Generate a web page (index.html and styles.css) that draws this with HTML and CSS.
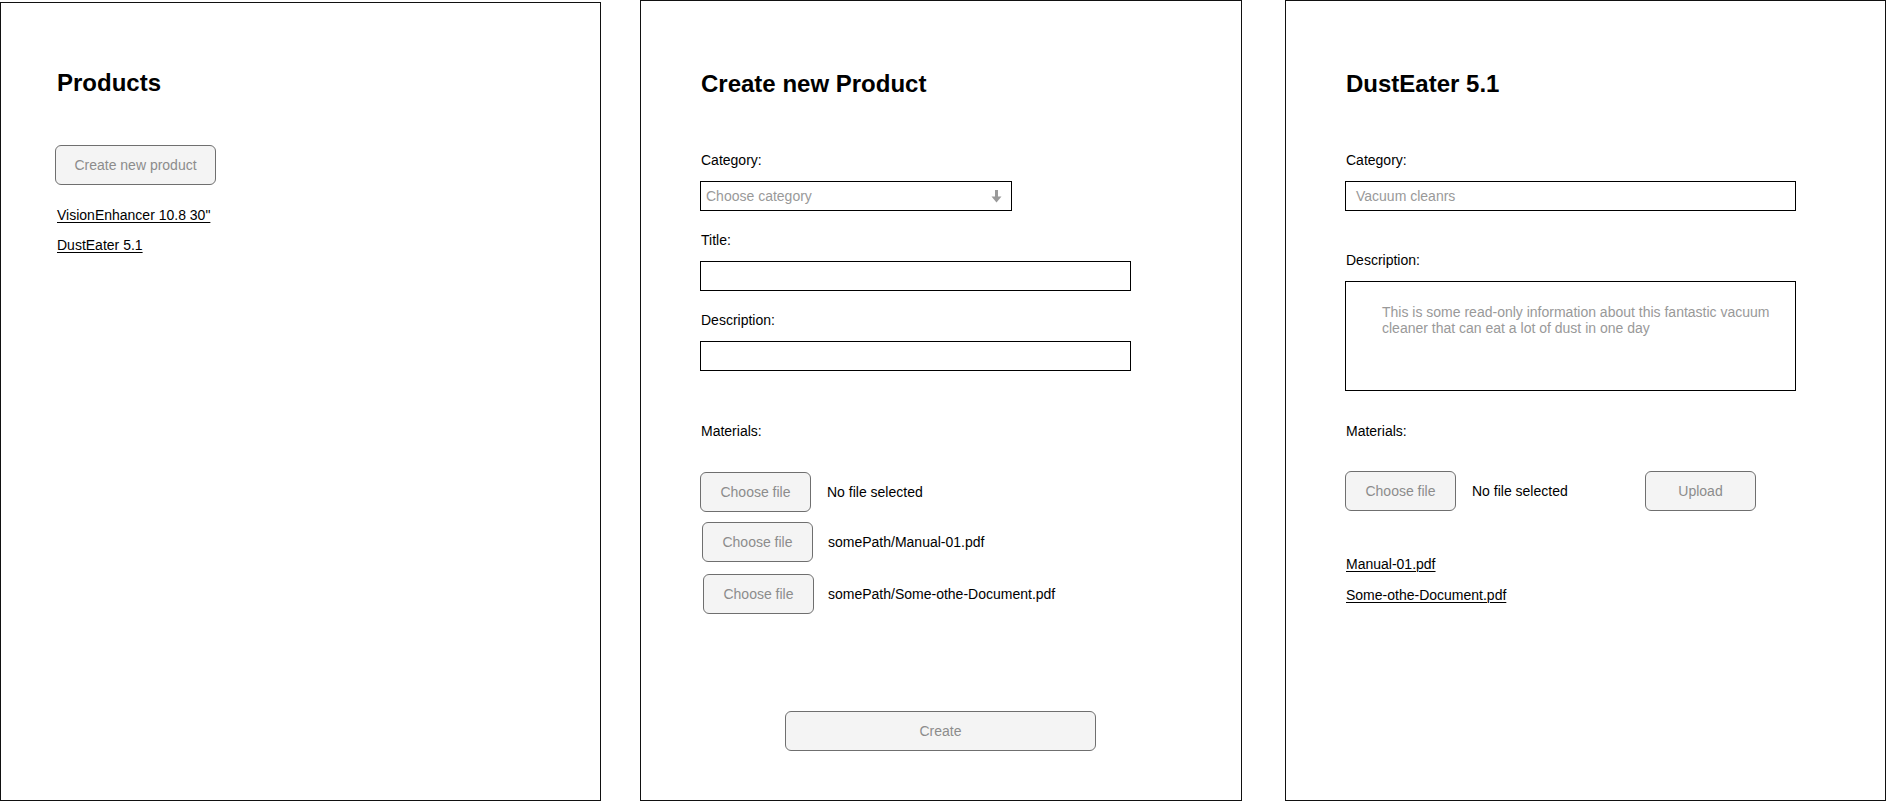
FILE: index.html
```html
<!DOCTYPE html>
<html lang="en">
<head>
<meta charset="utf-8">
<title>Products mockups</title>
<link rel="stylesheet" href="styles.css">
</head>
<body>
<div class="board">
  <section class="panel panel-list">
    <h1 class="title">Products</h1>
    <button class="btn btn-new" type="button">Create new product</button>
    <a class="link link-first" href="#">VisionEnhancer 10.8 30"</a>
    <a class="link link-next" href="#">DustEater 5.1</a>
  </section>

  <section class="panel panel-create">
    <h1 class="title">Create new Product</h1>
    <div class="label label-first">Category:</div>
    <div class="field select">
      <span class="placeholder">Choose category</span>
      <svg class="arrow" width="11" height="13" viewBox="0 0 11 13"><rect x="4" y="0" width="3" height="7" fill="#9a9a9a"/><path d="M0.5 6.5 H10.5 L5.5 12.5 Z" fill="#9a9a9a"/></svg>
    </div>
    <div class="label">Title:</div>
    <div class="field wide"></div>
    <div class="label">Description:</div>
    <div class="field wide"></div>
    <div class="label label-materials">Materials:</div>
    <div class="files">
      <div class="file-row"><button class="btn btn-file" type="button">Choose file</button><span class="file-name">No file selected</span></div>
      <div class="file-row row-2"><button class="btn btn-file" type="button">Choose file</button><span class="file-name">somePath/Manual-01.pdf</span></div>
      <div class="file-row row-3"><button class="btn btn-file" type="button">Choose file</button><span class="file-name">somePath/Some-othe-Document.pdf</span></div>
    </div>
    <button class="btn btn-create" type="button">Create</button>
  </section>

  <section class="panel panel-detail">
    <h1 class="title">DustEater 5.1</h1>
    <div class="label label-first">Category:</div>
    <div class="field readonly">Vacuum cleanrs</div>
    <div class="label label-desc">Description:</div>
    <div class="field area">This is some read-only information about this fantastic vacuum cleaner that can eat a lot of dust in one day</div>
    <div class="label label-materials2">Materials:</div>
    <div class="upload-row">
      <button class="btn btn-file" type="button">Choose file</button>
      <span class="file-name">No file selected</span>
      <button class="btn btn-upload" type="button">Upload</button>
    </div>
    <a class="link link-doc" href="#">Manual-01.pdf</a>
    <a class="link link-doc2" href="#">Some-othe-Document.pdf</a>
  </section>
</div>
</body>
</html>
```

FILE: styles.css
```css
html, body {
  margin: 0;
  padding: 0;
  background: #ffffff;
}

body {
  font-family: "Liberation Sans", Arial, Helvetica, sans-serif;
  font-size: 14px;
  line-height: 16px;
  color: #000;
  width: 1886px;
  height: 809px;
  overflow: hidden;
}

.board {
  display: flex;
  align-items: flex-start;
}

.panel {
  box-sizing: border-box;
  border: 1px solid #111;
  display: flex;
  flex-direction: column;
  align-items: flex-start;
  background: #fff;
}

.panel-list {
  width: 601px;
  height: 799px;
  margin-top: 2px;
  padding: 66px 0 0 56px;
}

.panel-create {
  width: 602px;
  height: 801px;
  margin-left: 39px;
  padding: 69px 0 0 59px;
}

.panel-detail {
  width: 601px;
  height: 801px;
  margin-left: 43px;
  padding: 69px 0 0 59px;
}

.title {
  margin: 0;
  font-size: 24px;
  line-height: 28px;
  font-weight: bold;
  color: #000;
}

.panel-create .title,
.panel-detail .title {
  padding-left: 1px;
}

.btn {
  box-sizing: border-box;
  height: 40px;
  padding: 0;
  border: 1px solid #6f6f6f;
  border-radius: 6px;
  background: #f4f4f4;
  color: #8c8c8c;
  font-family: "Liberation Sans", Arial, Helvetica, sans-serif;
  font-size: 14px;
  line-height: 16px;
  text-align: center;
  white-space: nowrap;
}

.btn-new {
  width: 161px;
  margin: 48px 0 0 -2px;
}

.link {
  color: #000;
  text-decoration: underline;
  text-underline-offset: 2px;
  text-decoration-thickness: 1px;
}

.link-first {
  margin-top: 22px;
}

.link-next {
  margin-top: 14px;
}

.label {
  padding-left: 1px;
  margin-top: 21px;
}

.label-first {
  margin-top: 54px;
}

.label-desc {
  margin-top: 41px;
}

.label-materials {
  margin-top: 52px;
}

.label-materials2 {
  margin-top: 32px;
}

.field {
  box-sizing: border-box;
  height: 30px;
  margin-top: 13px;
  border: 1px solid #000;
  background: #fff;
}

.select {
  width: 312px;
  display: flex;
  align-items: center;
  justify-content: space-between;
  padding: 0 9px 0 5px;
}

.placeholder {
  color: #999;
}

.arrow {
  display: block;
}

.wide {
  width: 431px;
}

.readonly {
  width: 451px;
  padding: 6px 10px;
  color: #999;
}

.area {
  width: 451px;
  height: 110px;
  padding: 22px 12px 0 36px;
  color: #999;
}

.files {
  margin-top: 33px;
  display: flex;
  flex-direction: column;
}

.file-row {
  display: flex;
  align-items: center;
}

.row-2 {
  margin-top: 10px;
  padding-left: 2px;
}

.row-3 {
  margin-top: 12px;
  padding-left: 3px;
}

.row-2 .file-name {
  margin-left: 15px;
}

.row-3 .file-name {
  margin-left: 14px;
}

.btn-file {
  width: 111px;
  flex: none;
}

.file-name {
  margin-left: 16px;
  color: #000;
  white-space: nowrap;
}

.btn-create {
  width: 311px;
  margin: 97px 0 0 85px;
}

.upload-row {
  margin-top: 32px;
  display: flex;
  align-items: center;
}

.upload-row .file-name {
  width: 173px;
  flex: none;
}

.btn-upload {
  width: 111px;
  flex: none;
}

.link-doc {
  margin-top: 45px;
  padding-left: 1px;
}

.link-doc2 {
  margin-top: 15px;
  padding-left: 1px;
}
```
